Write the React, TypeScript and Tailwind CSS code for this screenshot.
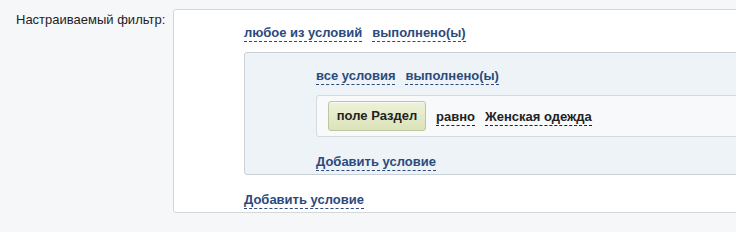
import React from "react";

const link =
  "inline-block font-bold text-[#2b4a7d] leading-[16px] border-b border-dashed border-[#2b4a7d] cursor-pointer";

export default function App() {
  return (
    <div
      className="w-[736px] h-[232px] overflow-hidden bg-[#f5f7f8] text-[13px]"
      style={{ fontFamily: '"Liberation Sans", Arial, sans-serif' }}
    >
      <div className="flex pt-[9px]">
        <div className="w-[173px] shrink-0 pl-[16px] pt-[3px] text-[#1e1e1e] leading-[16px]">
          Настраиваемый фильтр:
        </div>
        <div className="w-[620px] shrink-0 bg-white border border-[#d3d7db] rounded-tl-[3px] rounded-bl-[3px] pl-[70px] pt-[15px] pb-[3px]">
          <div className="flex gap-[10px]">
            <span className={link}>любое из условий</span>
            <span className={link}>выполнено(ы)</span>
          </div>
          <div className="mt-[10px] bg-[#edf3f6] border border-[#c9d0d5] rounded-[3px] pl-[71px] pt-[15px] pb-[2px]">
            <div className="flex gap-[10px]">
              <span className={link}>все условия</span>
              <span className={link}>выполнено(ы)</span>
            </div>
            <div className="mt-[10px] flex items-center gap-[10px] bg-[#f8f9fb] border border-[#d5d9dc] rounded-[3px] pl-[11px] h-[42px]">
              <button className="h-[30px] w-[98px] rounded-[3px] border border-[#bfc59c] bg-gradient-to-b from-[#eef2d9] to-[#dbe3b8] font-bold text-[#222] text-[13px] shadow-[inset_0_1px_0_rgba(255,255,255,0.6)]">
                поле Раздел
              </button>
              <span className="inline-block font-bold text-[#222] leading-[16px] border-b border-dashed border-[#222] mt-[3px]">
                равно
              </span>
              <span className="inline-block font-bold text-[#222] leading-[16px] border-b border-dashed border-[#222] mt-[3px]">
                Женская одежда
              </span>
            </div>
            <div className="mt-[15px]">
              <span className={link}>Добавить условие</span>
            </div>
          </div>
          <div className="mt-[15px]">
            <span className={link}>Добавить условие</span>
          </div>
        </div>
      </div>
    </div>
  );
}
